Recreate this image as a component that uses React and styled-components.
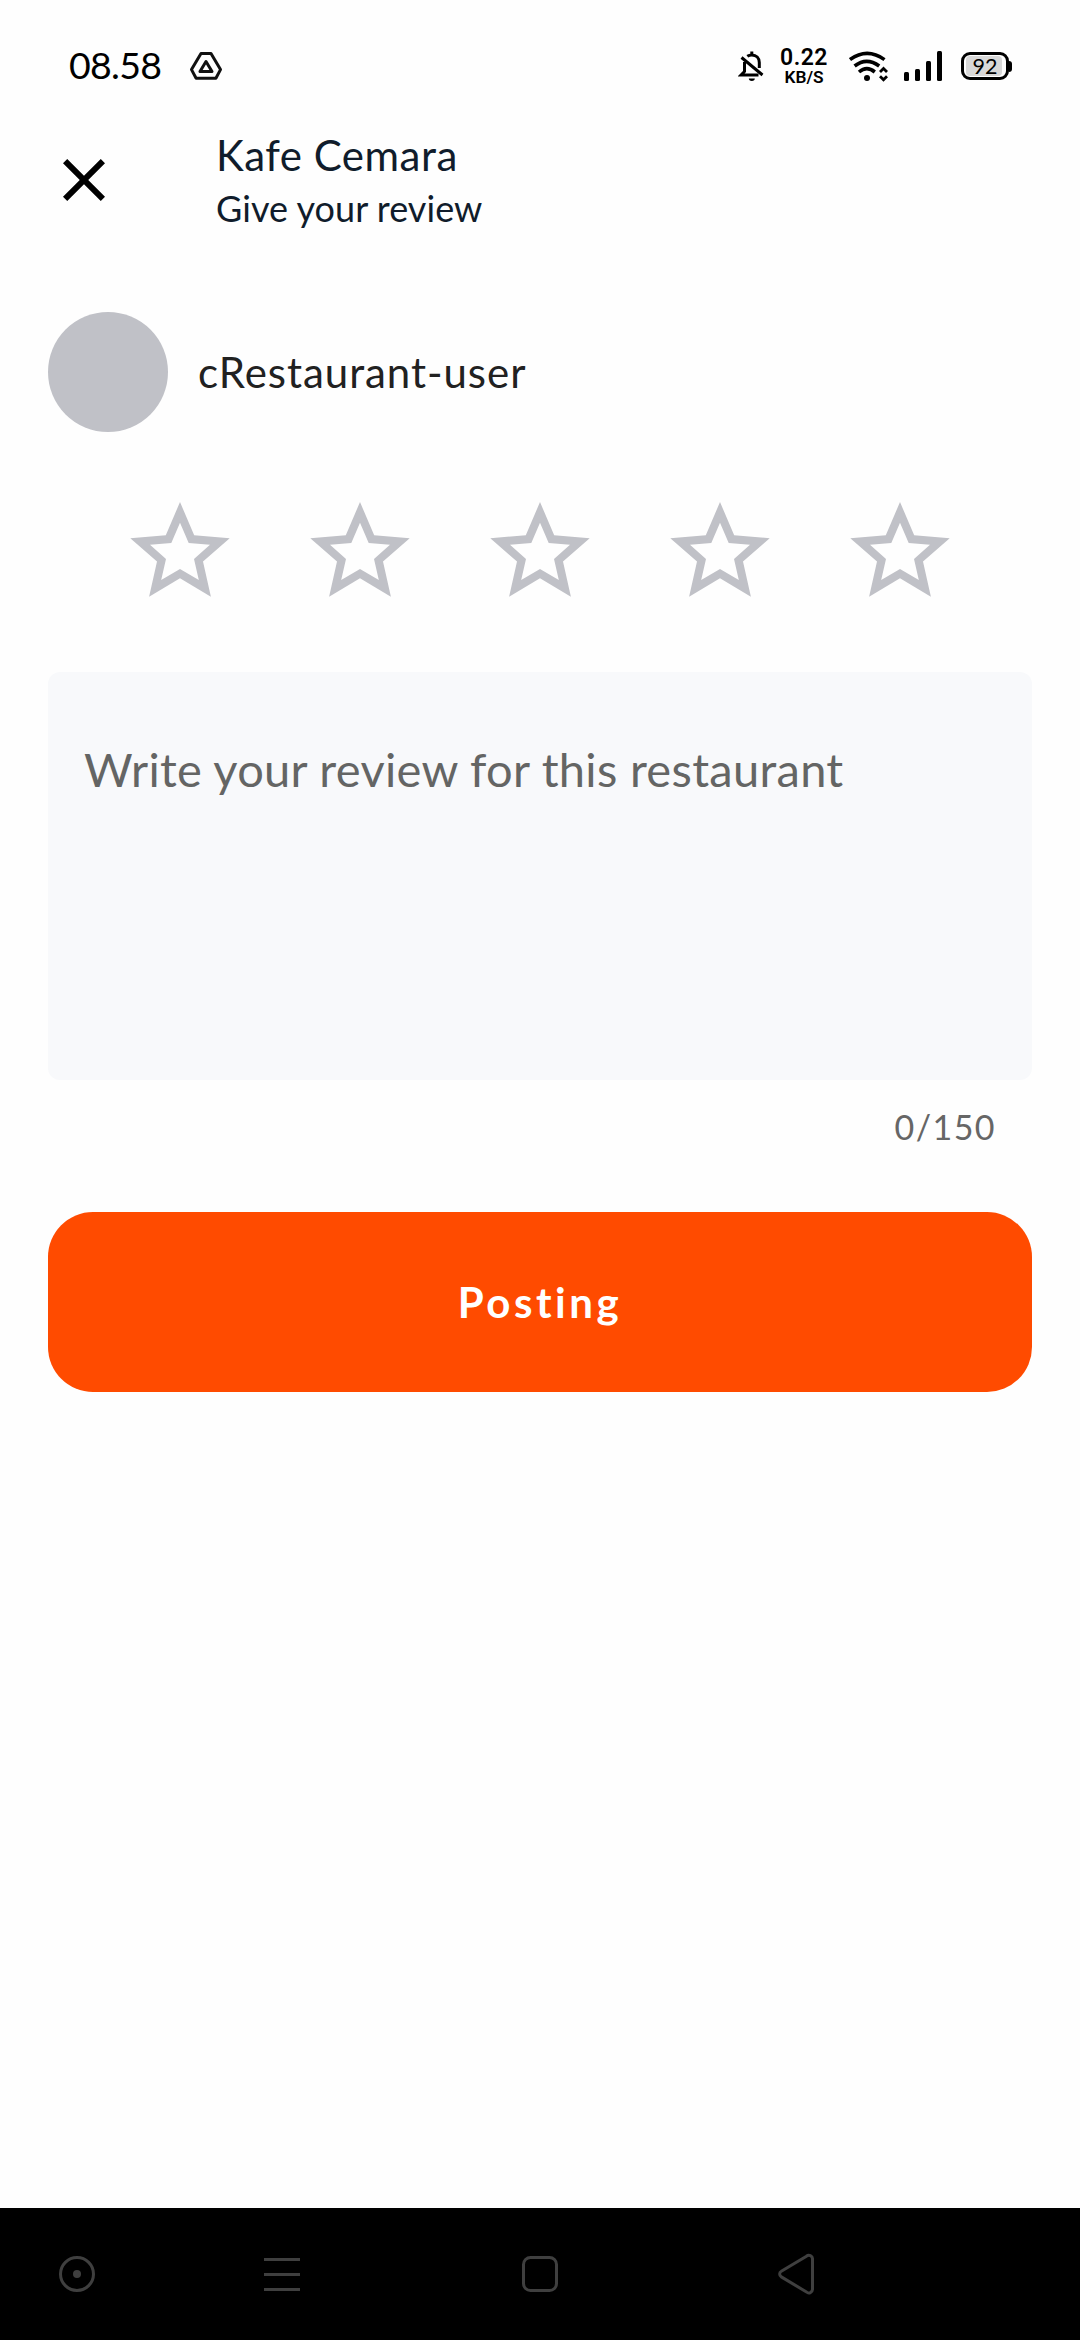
import React, { useState } from "react";
import styled, { createGlobalStyle } from "styled-components";
import { MdClose } from "react-icons/md";

const GlobalStyle = createGlobalStyle`
  * { box-sizing: border-box; }
  body { margin: 0; background: #fefefe; }
`;

const Screen = styled.div`
  display: flex;
  flex-direction: column;
  width: 1080px;
  height: 2340px;
  background: #fefefe;
  font-family: Lato, "Noto Sans", sans-serif;
`;

/* Status bar */
const StatusBar = styled.header`
  display: flex;
  align-items: center;
  height: 108px;
  padding: 24px 68px 0 69px;
  color: #000;
`;

const Clock = styled.span`
  width: 120px;
  padding-bottom: 2px;
  font-size: 37.5px;
  line-height: 44px;
  letter-spacing: -0.7px;
`;

const StatusIcons = styled.div`
  display: flex;
  align-items: center;
  margin-left: auto;
`;

const Glyph = styled.svg`
  display: block;
  flex: none;
  margin-left: ${(p) => p.$gap || 0}px;
`;

const NetSpeed = styled.div`
  display: flex;
  flex-direction: column;
  align-items: center;
  gap: 2px;
  width: 48px;
  margin-left: 16px;
  padding-top: 2px;
  font-family: Roboto, sans-serif;
  font-weight: 600;
  white-space: nowrap;
`;

const Rate = styled.span`
  font-size: 23px;
  line-height: 18px;
  letter-spacing: 0.5px;
`;

const Unit = styled.span`
  font-size: 17.3px;
  line-height: 16px;
`;

const Battery = styled.div`
  display: flex;
  align-items: center;
  margin-left: 19px;
`;

const BatteryShell = styled.div`
  width: 48px;
  height: 28px;
  padding: 1px;
  border: 3px solid #000;
  border-radius: 9px;
`;

const BatteryLevel = styled.div`
  display: flex;
  align-items: center;
  justify-content: center;
  width: 36px;
  height: 20px;
  padding-left: 2px;
  margin-left: 1px;
  border-radius: 4px;
  background: #d8d8d8;
  font-size: 21.5px;
  line-height: 20px;
`;

const BatteryTip = styled.div`
  width: 3px;
  height: 11px;
  border-radius: 0 3px 3px 0;
  background: #000;
`;

/* Title bar */
const TitleBar = styled.div`
  display: flex;
  align-items: center;
  height: 144px;
  padding-left: 48px;
  gap: 96px;
  color: #101c2b;
`;

const CloseButton = styled.button`
  display: flex;
  padding: 0;
  border: 0;
  background: none;
  color: #000;
`;

const Titles = styled.div`
  display: flex;
  flex-direction: column;
  padding-top: 1px;
`;

const Title = styled.h1`
  margin: 0;
  font-size: 42px;
  font-weight: 400;
  line-height: 54px;
  letter-spacing: 0.5px;
`;

const Subtitle = styled.p`
  margin: 0;
  font-size: 36px;
  line-height: 52px;
  letter-spacing: 0.05px;
`;

/* Review form */
const Form = styled.main`
  display: flex;
  flex-direction: column;
  flex: 1;
  padding: 60px 48px 0;
`;

const UserRow = styled.div`
  display: flex;
  align-items: center;
  gap: 30px;
`;

const Avatar = styled.div`
  width: 120px;
  height: 120px;
  border-radius: 50%;
  background: #c0c1c7;
`;

const UserName = styled.span`
  padding-bottom: 1px;
  font-size: 42px;
  line-height: 52px;
  letter-spacing: 0.95px;
  color: #212121;
`;

const Rating = styled.div`
  display: grid;
  grid-template-columns: repeat(5, 180px);
  justify-content: center;
  margin-top: 60px;
`;

const StarButton = styled.button`
  display: flex;
  align-items: center;
  justify-content: center;
  height: 120px;
  padding: 0;
  border: 0;
  background: none;
`;

const ReviewInput = styled.textarea`
  display: block;
  width: 100%;
  height: 408px;
  margin-top: 60px;
  padding: 67px 37px 20px 36px;
  border: 0;
  border-radius: 12px;
  outline: 0;
  resize: none;
  background: #f8f9fb;
  color: #212121;
  font-family: inherit;
  font-size: 47px;
  line-height: 60px;
  letter-spacing: 0.3px;

  &::placeholder {
    color: #646564;
    opacity: 1;
  }
`;

const Counter = styled.span`
  align-self: flex-end;
  height: 107px;
  margin-top: 25px;
  padding-right: 36px;
  font-size: 34px;
  line-height: 44px;
  letter-spacing: 1.45px;
  color: #666;
`;

const PostButton = styled.button`
  height: 180px;
  padding: 0 0 1px;
  border: 0;
  border-radius: 45px;
  background: #ff4b00;
  color: #fff;
  font-family: inherit;
  font-size: 42px;
  font-weight: 700;
  letter-spacing: 3.5px;
`;

/* System navigation */
const NavBar = styled.nav`
  display: grid;
  grid-template-columns: 205px 258px 256px 36px;
  align-items: center;
  height: 132px;
  padding-left: 59px;
  background: #000;
  color: #3f3f3f;
`;

const DriveIcon = () => (
  <Glyph width="34" height="32" viewBox="0 0 34 32" fill="none" stroke="#111" strokeWidth="3" strokeLinejoin="round">
    <path d="M12 3.600h10L31.500 19.600l-4.600 8.600H7.100L2.500 19.600z" />
    <path d="M17 11.500l6 10H11z" />
  </Glyph>
);

const MutedBellIcon = () => (
  <Glyph width="26" height="32" viewBox="0 0 26 32" fill="none" stroke="#000" strokeWidth="3">
    <path d="M3.500 7.500l21 17.500" />
    <path d="M6.500 12v9.500l-3.500 3.500h17.500" />
    <path d="M9.300 6.300c1.400-1 2.800-1.400 4.500-1.400 4.500 0 7.500 3 7.500 7.600v5.500" />
    <path d="M13.800 1.500v3.500" />
    <path d="M10.800 28.500h6a3 2.400 0 0 1-6 0z" fill="#000" stroke="none" />
  </Glyph>
);

const WifiIcon = () => (
  <Glyph $gap={21} width="39" height="32" viewBox="0 0 39 32" fill="none" stroke="#000" strokeWidth="3.600">
    <path d="M1 9.600q17-12.400 34.500 0" />
    <path d="M5.600 16q12-9.400 24.600 0" />
    <path d="M10 22q7.800-6.600 15.800 0" />
    <circle cx="18" cy="28" r="3" fill="#000" stroke="none" />
    <path d="M31 22l3.500-3.500L38 22M31 26.200l3.500 3.500L38 26.200" strokeWidth="2.800" />
  </Glyph>
);

const SignalIcon = () => (
  <Glyph $gap={16} width="38" height="32" viewBox="0 0 38 32">
    <rect x="0" y="22" width="5" height="9" rx="1.500" />
    <rect x="11" y="19" width="5" height="12" rx="1.500" />
    <rect x="22" y="11" width="5" height="20" rx="1.500" />
    <rect x="33" y="1" width="5" height="30" rx="1.500" />
  </Glyph>
);

const StarIcon = () => (
  <svg width="100" height="100" viewBox="0 0 100 100">
    <path
      fill="#c0c1c7"
      fillRule="evenodd"
      d="M50 0l14.200 33.200L99.700 36.200 73 59.600 80.900 94.800 50 76.200 19.100 94.800 27 59.600.3 36.200l35.500-3zM50 20.700L41.300 41 20 42.800 36 57 31.200 78 50 67 68.800 78 64 57 80 42.800 58.700 41z"
    />
  </svg>
);

const NavIcon = ({ children }) => (
  <Glyph width="36" height="42" viewBox="0 0 36 42" fill="none" stroke="currentColor" strokeWidth="3">
    {children}
  </Glyph>
);

const MAX_LENGTH = 150;

export default function App() {
  const [review, setReview] = useState("");

  return (
    <Screen>
      <GlobalStyle />
      <StatusBar>
        <Clock>08.58</Clock>
        <DriveIcon />
        <StatusIcons>
          <MutedBellIcon />
          <NetSpeed>
            <Rate>0.22</Rate>
            <Unit>KB/S</Unit>
          </NetSpeed>
          <WifiIcon />
          <SignalIcon />
          <Battery>
            <BatteryShell>
              <BatteryLevel>92</BatteryLevel>
            </BatteryShell>
            <BatteryTip />
          </Battery>
        </StatusIcons>
      </StatusBar>

      <TitleBar>
        <CloseButton aria-label="Close">
          <MdClose size={72} />
        </CloseButton>
        <Titles>
          <Title>Kafe Cemara</Title>
          <Subtitle>Give your review</Subtitle>
        </Titles>
      </TitleBar>

      <Form>
        <UserRow>
          <Avatar />
          <UserName>cRestaurant-user</UserName>
        </UserRow>
        <Rating>
          {[1, 2, 3, 4, 5].map((n) => (
            <StarButton key={n} aria-label={`${n}`}>
              <StarIcon />
            </StarButton>
          ))}
        </Rating>
        <ReviewInput
          placeholder="Write your review for this restaurant"
          maxLength={MAX_LENGTH}
          value={review}
          onChange={(e) => setReview(e.target.value)}
        />
        <Counter>
          {review.length}/{MAX_LENGTH}
        </Counter>
        <PostButton>Posting</PostButton>
      </Form>

      <NavBar>
        <NavIcon>
          <circle cx="18" cy="21" r="16.500" />
          <circle cx="18" cy="21" r="4" fill="currentColor" stroke="none" />
        </NavIcon>
        <NavIcon>
          <path d="M0 6.500h36M0 21.500h36M0 36.500h36" />
        </NavIcon>
        <NavIcon>
          <rect x="1.500" y="4.500" width="33" height="33" rx="7" />
        </NavIcon>
        <NavIcon>
          <path strokeLinejoin="round" d="M28.500 3.200L3.300 18.300a3.200 3.200 0 0 0 0 5.600L28.500 39a3.600 3.600 0 0 0 6-2.800V6a3.600 3.600 0 0 0-6-2.800z" />
        </NavIcon>
      </NavBar>
    </Screen>
  );
}
